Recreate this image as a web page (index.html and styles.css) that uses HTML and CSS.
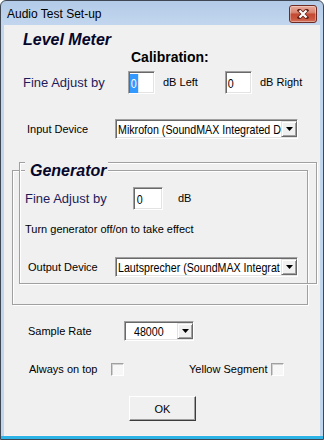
FILE: index.html
```html
<!DOCTYPE html>
<html lang="en">
<head>
    <meta charset="UTF-8">
    <meta name="viewport" content="width=device-width, initial-scale=1.0">
    <title>Audio Test Set-up</title>
    <link rel="stylesheet" href="styles.css">
</head>
<body>
    <div class="window">
        <div class="titlebar">
            <span class="title">Audio Test Set-up</span>
            <button class="close" type="button" aria-label="Close">
                <svg width="12" height="10" viewBox="0 0 12 10">
                    <path d="M2.5 1.5 L9.5 8.5 M9.5 1.5 L2.5 8.5" stroke="#6a2318" stroke-width="3.8" stroke-linecap="square"/>
                    <path d="M2.5 1.5 L9.5 8.5 M9.5 1.5 L2.5 8.5" stroke="#ffffff" stroke-width="2.2"/>
                </svg>
            </button>
        </div>
        <div class="client">
            <h2 class="heading">Level Meter</h2>
            <div class="calibration">Calibration:</div>
            <div class="row fine-row">
                <label class="big-label">Fine Adjust by</label>
                <span class="textbox"><span class="narrow sel">0</span></span>
                <span class="unit unit-left">dB Left</span>
                <span class="textbox"><span class="narrow">0</span></span>
                <span class="unit">dB Right</span>
            </div>
            <div class="row device-row">
                <label class="label device-label">Input Device</label>
                <div class="combo device-combo">
                    <span class="combo-text"><span class="narrow">Mikrofon (SoundMAX Integrated D</span></span>
                    <span class="drop"><svg width="7" height="4" viewBox="0 0 7 4"><polygon points="0,0 7,0 3.5,4" fill="#000"/></svg></span>
                </div>
            </div>

            <div class="generator">
                <h2 class="heading legend">Generator</h2>
                <div class="row gen-fine-row">
                    <label class="big-label gen-label">Fine Adjust by</label>
                    <span class="textbox wide"><span class="narrow">0</span></span>
                    <span class="unit unit-db">dB</span>
                </div>
                <p class="note">Turn generator off/on to take effect</p>
                <div class="row output-row">
                    <label class="label output-label">Output Device</label>
                    <div class="combo device-combo">
                        <span class="combo-text"><span class="narrow">Lautsprecher (SoundMAX Integrat</span></span>
                        <span class="drop"><svg width="7" height="4" viewBox="0 0 7 4"><polygon points="0,0 7,0 3.5,4" fill="#000"/></svg></span>
                    </div>
                </div>
            </div>

            <div class="row rate-row">
                <label class="label rate-label">Sample Rate</label>
                <div class="combo rate-combo">
                    <span class="combo-text rate-text"><span class="narrow">48000</span></span>
                    <span class="drop"><svg width="7" height="4" viewBox="0 0 7 4"><polygon points="0,0 7,0 3.5,4" fill="#000"/></svg></span>
                </div>
            </div>
            <div class="row check-row">
                <label class="label check-label">Always on top</label>
                <span class="check"></span>
                <label class="label check-label second">Yellow Segment</label>
                <span class="check"></span>
            </div>
            <div class="buttons">
                <button class="ok" type="button">OK</button>
            </div>
        </div>
    </div>
</body>
</html>
```

FILE: styles.css
```css
body {
    margin: 0;
    background-color: #ffffff;
    font-family: "Liberation Sans", Arial, sans-serif;
    color: #000000;
}
.window {
    width: 324px;
    height: 440px;
    box-sizing: border-box;
    border: 1px solid #3f4852;
    border-radius: 6px 6px 0 0;
    padding-bottom: 3px;
    display: flex;
    flex-direction: column;
    background:
        linear-gradient(#2eb3e6, #2eb3e6) left bottom / 100% 3px no-repeat,
        linear-gradient(#b3cbe8, #c2d6ee 24px, #c1d5ec);
}
.titlebar {
    height: 24px;
    flex: none;
    display: flex;
    align-items: center;
    padding: 0 6px;
}
.title {
    flex: 1;
    font-size: 12px;
    line-height: 14px;
    padding-top: 1px;
}
.close {
    width: 28px;
    height: 18px;
    align-self: flex-start;
    margin-top: 4px;
    padding: 0;
    border: 1px solid #6e2b23;
    border-radius: 3px;
    background: linear-gradient(#e9aa9b, #d98672 40%, #c44a34 52%, #c9563d 80%, #d5735a);
    box-shadow: inset 0 0 0 1px rgba(255, 255, 255, 0.35);
    display: flex;
    align-items: center;
    justify-content: center;
}
.client {
    flex: 1;
    margin: 0 3px;
    background-color: #f0f0f0;
    border-bottom: 1px solid #faf0f0;
    padding-top: 6px;
}
.heading {
    margin: 0;
    font-size: 16px;
    line-height: 18px;
    font-weight: bold;
    font-style: italic;
    color: #06062a;
    padding-left: 19px;
}
.calibration {
    font-size: 14px;
    line-height: 16px;
    font-weight: bold;
    padding-left: 127px;
}
.row {
    display: flex;
    align-items: center;
}
.label {
    font-size: 11px;
    line-height: 13px;
    flex: none;
}
.big-label {
    flex: none;
    width: 105px;
    font-size: 13px;
    line-height: 15px;
    color: #1e1b5a;
}
.unit {
    font-size: 11px;
    line-height: 13px;
    margin-left: 8px;
}
.unit-left {
    width: 62px;
}
/* Arial Narrow look, as the old edit and combo controls use it */
.narrow {
    display: inline-block;
    white-space: nowrap;
    font-size: 13px;
    transform: scaleX(0.82);
    transform-origin: left center;
}
.textbox {
    flex: none;
    box-sizing: border-box;
    width: 27px;
    height: 23px;
    padding: 1px 0 0 1px;
    background-color: #ffffff;
    border: 1px solid;
    border-color: #a0a0a0 #ffffff #ffffff #a0a0a0;
    box-shadow: inset 1px 1px #696969, inset -1px -1px #e3e3e3;
    line-height: 19px;
}
.textbox .narrow {
    padding: 0 2px 0 1px;
}
.textbox .sel {
    background-color: #3399ff;
    color: #ffffff;
}
.textbox.wide {
    width: 30px;
    padding-left: 2px;
}
.fine-row {
    margin-top: 6px;
    height: 23px;
    padding-left: 19px;
}
.device-row {
    margin-top: 25px;
    height: 20px;
    padding-left: 23px;
}
.device-label {
    width: 88px;
}
.combo {
    flex: none;
    box-sizing: border-box;
    height: 20px;
    padding: 1px 0 1px 2px;
    background-color: #ffffff;
    border: 1px solid;
    border-color: #a0a0a0 #ffffff #ffffff #a0a0a0;
    box-shadow: inset 1px 1px #696969, inset -1px -1px #e3e3e3;
    display: flex;
    align-items: center;
}
.device-combo {
    width: 183px;
}
.combo-text {
    flex: 1;
    min-width: 0;
    line-height: 16px;
}
.drop {
    flex: none;
    box-sizing: border-box;
    width: 16px;
    height: 16px;
    background-color: #f0f0f0;
    border: 1px solid;
    border-color: #e3e3e3 #696969 #696969 #e3e3e3;
    box-shadow: inset 1px 1px #ffffff, inset -1px -1px #a0a0a0;
    display: flex;
    align-items: center;
    justify-content: center;
}
.generator {
    position: relative;
    box-sizing: border-box;
    width: 296px;
    height: 135px;
    margin: 31px 0 0 8px;
    border: 1px solid #a0a0a0;
    box-shadow: inset 1px 1px #ffffff, 1px 1px #ffffff;
}
.generator::before {
    content: "";
    position: absolute;
    left: 6px;
    top: -9px;
    width: 298px;
    height: 122px;
    box-sizing: border-box;
    border: 1px solid #a0a0a0;
    box-shadow: inset 1px 1px #ffffff, 1px 1px #ffffff;
}
.legend {
    position: relative;
    z-index: 1;
    width: fit-content;
    margin: -10px 0 0 12px;
    padding: 1px 2px 0 5px;
    background-color: #f0f0f0;
}
.gen-fine-row {
    margin-top: 7px;
    height: 23px;
    padding-left: 12px;
}
.gen-label {
    width: 108px;
}
.unit-db {
    margin-left: 15px;
}
.note {
    margin: 13px 0 0;
    padding-left: 12px;
    font-size: 11px;
    line-height: 13px;
}
.output-row {
    margin-top: 21px;
    height: 20px;
    padding-left: 15px;
}
.output-label {
    width: 87px;
}
.rate-row {
    margin-top: 16px;
    height: 20px;
    padding-left: 24px;
}
.rate-label {
    width: 96px;
}
.rate-combo {
    width: 70px;
}
.rate-text {
    padding-left: 7px;
}
.check-row {
    margin-top: 22px;
    height: 13px;
    padding-left: 25px;
}
.check-label {
    width: 82px;
}
.check-label.second {
    margin-left: 65px;
}
.check {
    flex: none;
    box-sizing: border-box;
    width: 13px;
    height: 13px;
    background-color: #f7f7f7;
    border: 1px solid;
    border-color: #a0a0a0 #ffffff #ffffff #a0a0a0;
    box-shadow: inset 1px 1px #d0d0d0;
}
.buttons {
    margin-top: 20px;
    padding-left: 125px;
}
.ok {
    width: 67px;
    height: 25px;
    padding: 0;
    font-family: "Liberation Sans", Arial, sans-serif;
    font-size: 11px;
    color: #000000;
    background-color: #f0f0f0;
    border: 1px solid;
    border-color: #ffffff #3c3c3c #3c3c3c #ffffff;
    box-shadow: inset -1px -1px #a0a0a0;
}
```
